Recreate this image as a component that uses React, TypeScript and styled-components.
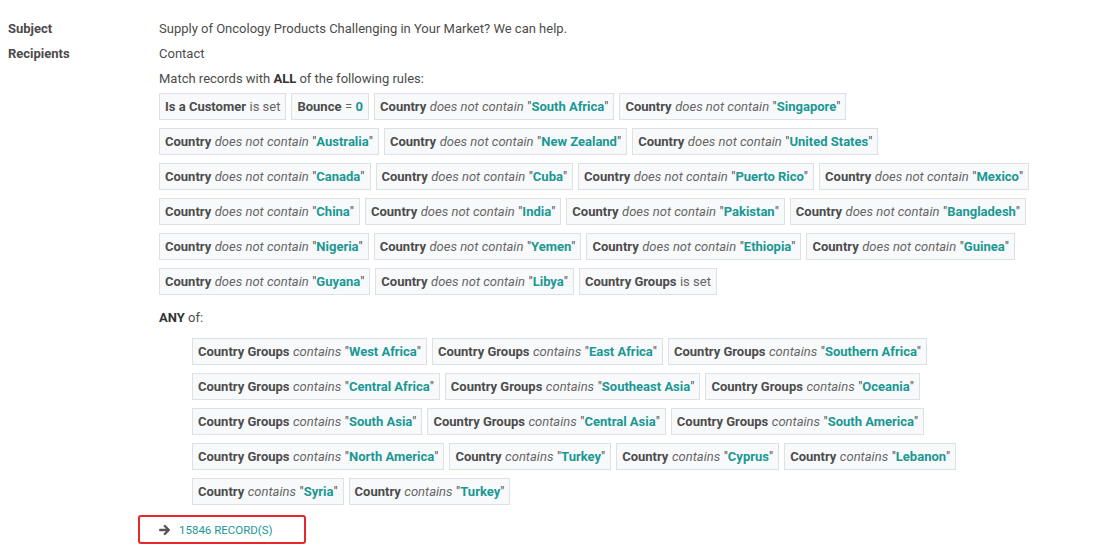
import styled, { createGlobalStyle } from "styled-components";

type Rule = { field: string; op: string; value?: string; quoted?: boolean };

const notContain = (c: string): Rule => ({
  field: "Country",
  op: "does not contain",
  value: c,
  quoted: true,
});

const allRows: Rule[][] = [
  [
    { field: "Is a Customer", op: "is set" },
    { field: "Bounce", op: "=", value: "0" },
    notContain("South Africa"),
    notContain("Singapore"),
  ],
  ["Australia", "New Zealand", "United States"].map(notContain),
  ["Canada", "Cuba", "Puerto Rico", "Mexico"].map(notContain),
  ["China", "India", "Pakistan", "Bangladesh"].map(notContain),
  ["Nigeria", "Yemen", "Ethiopia", "Guinea"].map(notContain),
  [notContain("Guyana"), notContain("Libya"), { field: "Country Groups", op: "is set" }],
];

const group = (v: string): Rule => ({
  field: "Country Groups",
  op: "contains",
  value: v,
  quoted: true,
});
const country = (v: string): Rule => ({
  field: "Country",
  op: "contains",
  value: v,
  quoted: true,
});

const anyRows: Rule[][] = [
  [group("West Africa"), group("East Africa"), group("Southern Africa")],
  [group("Central Africa"), group("Southeast Asia"), group("Oceania")],
  [group("South Asia"), group("Central Asia"), group("South America")],
  [group("North America"), country("Turkey"), country("Cyprus"), country("Lebanon")],
  [country("Syria"), country("Turkey")],
];

function RuleChip({ rule }: { rule: Rule }) {
  return (
    <Chip>
      <Field>{rule.field}</Field>
      <Op $italic={rule.quoted}>{rule.op}</Op>
      {rule.value && (
        <span>
          {rule.quoted && <Quote>"</Quote>}
          <Value>{rule.value}</Value>
          {rule.quoted && <Quote>"</Quote>}
        </span>
      )}
    </Chip>
  );
}

function ChipRows({ rows }: { rows: Rule[][] }) {
  return (
    <>
      {rows.map((row, i) => (
        <ChipRow key={i}>
          {row.map((r, j) => (
            <RuleChip key={j} rule={r} />
          ))}
        </ChipRow>
      ))}
    </>
  );
}

export default function App() {
  return (
    <>
      <GlobalStyle />
      <Sheet>
        <Label>Subject</Label>
        <Cell>Supply of Oncology Products Challenging in Your Market? We can help.</Cell>
        <Label>Recipients</Label>
        <Cell>
          <Line>Contact</Line>
          <Line>
            Match records with <b>ALL</b> of the following rules:
          </Line>
          <Chips>
            <ChipRows rows={allRows} />
          </Chips>
          <AnyLine>
            <b>ANY</b> of:
          </AnyLine>
          <Nested>
            <ChipRows rows={anyRows} />
          </Nested>
        </Cell>
      </Sheet>
      <RecordButton type="button">
        <svg width="12" height="12" viewBox="0 0 12 12">
          <path
            d="M1.2 6h8M5.8 2 9.8 6 5.8 10"
            fill="none"
            stroke="#555"
            strokeWidth="2.4"
            strokeLinecap="round"
            strokeLinejoin="round"
          />
        </svg>
        15846 RECORD(S)
      </RecordButton>
    </>
  );
}

const GlobalStyle = createGlobalStyle`
  body {
    margin: 0;
    background: #fff;
    font-family: Roboto, "Noto Sans", sans-serif;
    font-size: 13px;
    color: #4c4c4c;
  }
`;

const Sheet = styled.div`
  display: grid;
  grid-template-columns: 151px 1fr;
  padding: 16px 0 0 8px;
  line-height: 25px;
`;

const Label = styled.div`
  font-weight: 700;
  color: #4c4c4c;
  height: 25px;
`;

const Cell = styled.div`
  color: #4c4c4c;
`;

const Line = styled.div`
  height: 25px;
  b {
    font-weight: 700;
    color: #333;
  }
`;

const Chips = styled.div`
  padding-top: 2px;
`;

const ChipRow = styled.div`
  display: flex;
  gap: 5px;
  margin-bottom: 8px;
`;

const Chip = styled.div`
  display: flex;
  align-items: center;
  gap: 3.5px;
  height: 27px;
  box-sizing: border-box;
  padding: 0 5px;
  border: 1px solid #dde1e5;
  background: #f8f9fa;
  white-space: nowrap;
  line-height: 1;
`;

const Field = styled.span`
  font-weight: 700;
  color: #4c4c4c;
`;

const Op = styled.span<{ $italic?: boolean }>`
  font-style: ${(p) => (p.$italic ? "italic" : "normal")};
  color: #666;
`;

const Quote = styled.span`
  color: #4c4c4c;
`;

const Value = styled.span`
  font-weight: 700;
  color: #1a9893;
`;

const AnyLine = styled.div`
  height: 25px;
  padding-top: 2px;
  margin: 8px 0 8px;
  b {
    font-weight: 700;
    color: #333;
  }
`;

const Nested = styled.div`
  padding-left: 33px;
`;

const RecordButton = styled.button`
  display: flex;
  align-items: center;
  gap: 8px;
  margin: 2px 0 0 138px;
  width: 168px;
  height: 29px;
  box-sizing: border-box;
  padding: 0 0 0 19px;
  border: 2px solid #e8262b;
  border-radius: 3px;
  background: #fff;
  font-family: Roboto, sans-serif;
  font-size: 11.5px;
  color: #1a9893;
  text-transform: uppercase;
  cursor: pointer;
`;
